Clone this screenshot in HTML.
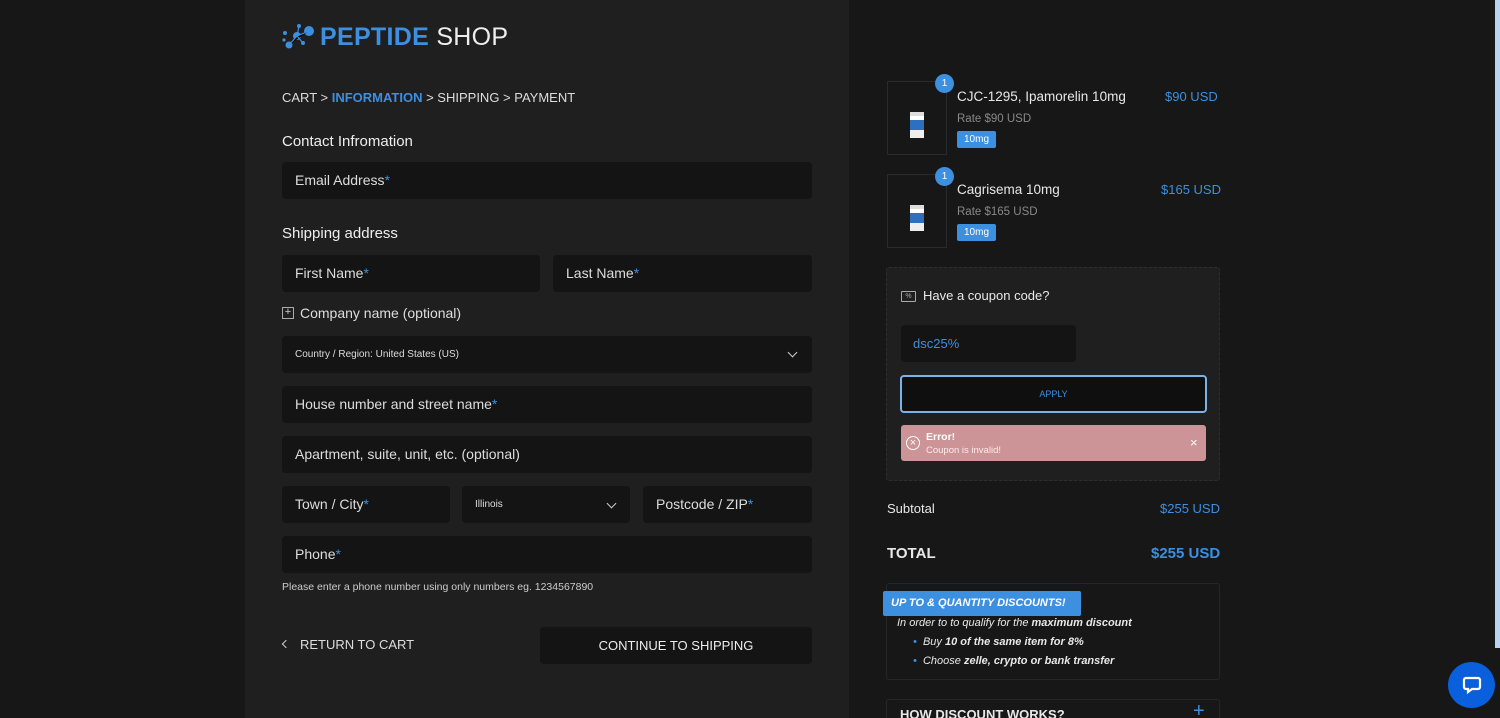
<!DOCTYPE html>
<html style="width:1500px;height:718px;overflow:hidden"><head><meta charset="utf-8"><style>
*{box-sizing:border-box;margin:0;padding:0}
body{width:1500px;height:718px;overflow:hidden;background:#171717;font-family:"Liberation Sans",sans-serif;color:#e8e8e8;position:relative}
.a{position:absolute}
.left{left:245px;top:0;width:604px;height:718px;background:#1f1f1f}
.in{position:absolute;background:#141414;border-radius:4px;height:37px;font-size:14px;color:#ddd;padding-left:13px;line-height:37px}
.in b{color:#3d8fe0;font-weight:normal}
.blue{color:#3d8fe0}
.h{font-size:15px;color:#eee}
.tag{background:#3d8fe0;color:#fff;font-size:10px;padding:0 7px;height:17px;line-height:17px;border-radius:2px}
.badge{width:19px;height:19px;border-radius:50%;background:#3d8fe0;color:#fff;font-size:10px;text-align:center;line-height:19px}
.thumb{width:60px;height:74px;border:1px solid #2a2a2a}
.vial{position:absolute;left:22px;top:30px;width:14px;height:26px;background:linear-gradient(#ddd 0 4px,#fff 4px 8px,#2d6fc0 8px 18px,#eee 18px)}
</style></head><body>
<div class="a left"></div>
<svg class="a" style="left:281px;top:22px" width="36" height="30" viewBox="0 0 36 30"><g fill="#3d8fe0"><circle cx="28" cy="9" r="5"/><circle cx="16" cy="14" r="4"/><circle cx="8" cy="23" r="3.5"/><circle cx="4" cy="11" r="2"/><circle cx="3" cy="18" r="1.6"/><circle cx="18" cy="4" r="2"/><circle cx="22" cy="21" r="2"/></g><path d="M28 9L16 14L8 23M16 14L18 4M16 14L22 21" stroke="#3d8fe0" stroke-width="1.2"/></svg>
<div class="a" style="left:320px;top:23px;font-size:25px;font-weight:bold;color:#3d8fe0;letter-spacing:0.3px">PEPTIDE <span style="color:#eee;font-weight:normal">SHOP</span></div>
<div class="a" style="left:282px;top:90px;font-size:13px;color:#ddd">CART &gt; <span class="blue" style="font-weight:bold">INFORMATION</span> &gt; SHIPPING &gt; PAYMENT</div>
<div class="a h" style="left:282px;top:133px">Contact Infromation</div>
<div class="in" style="left:282px;top:162px;width:530px">Email Address<b>*</b></div>
<div class="a h" style="left:282px;top:225px">Shipping address</div>
<div class="in" style="left:282px;top:255px;width:258px">First Name<b>*</b></div>
<div class="in" style="left:553px;top:255px;width:259px">Last Name<b>*</b></div>
<div class="a" style="left:282px;top:307px;width:12px;height:12px;border:1px solid #aaa;font-size:11px;line-height:9px;text-align:center;color:#ccc">+</div>
<div class="a" style="left:300px;top:305px;font-size:14px;color:#ddd">Company name (optional)</div>
<div class="in" style="left:282px;top:336px;width:530px;font-size:10px">Country / Region: United States (US)</div>
<div class="a" style="left:789px;top:349px;width:7px;height:7px;border-right:1.5px solid #ccc;border-bottom:1.5px solid #ccc;transform:rotate(45deg)"></div>
<div class="in" style="left:282px;top:386px;width:530px">House number and street name<b>*</b></div>
<div class="in" style="left:282px;top:436px;width:530px">Apartment, suite, unit, etc. (optional)</div>
<div class="in" style="left:282px;top:486px;width:168px">Town / City<b>*</b></div>
<div class="in" style="left:462px;top:486px;width:168px;font-size:10px">Illinois</div>
<div class="a" style="left:608px;top:500px;width:7px;height:7px;border-right:1.5px solid #ccc;border-bottom:1.5px solid #ccc;transform:rotate(45deg)"></div>
<div class="in" style="left:643px;top:486px;width:169px">Postcode / ZIP<b>*</b></div>
<div class="in" style="left:282px;top:536px;width:530px">Phone<b>*</b></div>
<div class="a" style="left:282px;top:581px;font-size:10.5px;color:#ccc">Please enter a phone number using only numbers eg. 1234567890</div>
<div class="a" style="left:283px;top:641px;width:6px;height:6px;border-left:1.5px solid #ccc;border-bottom:1.5px solid #ccc;transform:rotate(45deg)"></div>
<div class="a" style="left:300px;top:637px;font-size:13px;color:#ddd">RETURN TO CART</div>
<div class="a" style="left:540px;top:627px;width:272px;height:37px;background:#141414;border-radius:4px;text-align:center;line-height:37px;font-size:13px;color:#eee">CONTINUE TO SHIPPING</div>

<div class="a thumb" style="left:887px;top:81px"><div class="vial"></div></div>
<div class="a badge" style="left:935px;top:74px">1</div>
<div class="a" style="left:957px;top:89px;font-size:13.5px">CJC-1295, Ipamorelin 10mg</div>
<div class="a blue" style="left:1165px;top:89px;font-size:13px">$90 USD</div>
<div class="a" style="left:957px;top:113px;font-size:11.5px;color:#888">Rate $90 USD</div>
<div class="a tag" style="left:957px;top:131px">10mg</div>
<div class="a thumb" style="left:887px;top:174px"><div class="vial"></div></div>
<div class="a badge" style="left:935px;top:167px">1</div>
<div class="a" style="left:957px;top:182px;font-size:13.5px">Cagrisema 10mg</div>
<div class="a blue" style="left:1161px;top:182px;font-size:13px">$165 USD</div>
<div class="a" style="left:957px;top:206px;font-size:11.5px;color:#888">Rate $165 USD</div>
<div class="a tag" style="left:957px;top:224px">10mg</div>

<div class="a" style="left:886px;top:267px;width:334px;height:214px;background:#1f1f1f;border:1px dashed #2e2e2e;border-radius:3px"></div>
<div class="a" style="left:901px;top:291px;width:15px;height:11px;border:1px solid #aaa;border-radius:1px;font-size:7px;text-align:center;line-height:9px;color:#aaa">%</div>
<div class="a" style="left:923px;top:288px;font-size:13px">Have a coupon code?</div>
<div class="a" style="left:901px;top:325px;width:175px;height:37px;background:#141414;border-radius:4px;line-height:37px;padding-left:12px;font-size:13px;color:#3d8fe0">dsc25%</div>
<div class="a" style="left:900px;top:375px;width:307px;height:38px;background:#0f0f0f;border:2px solid #7ab3ea;border-radius:4px;text-align:center;line-height:34px;font-size:9px;color:#3d8fe0">APPLY</div>
<div class="a" style="left:901px;top:425px;width:305px;height:36px;background:#cc9496;border-radius:3px"></div>
<div class="a" style="left:906px;top:436px;width:14px;height:14px;border:1px solid #fff;border-radius:50%;color:#fff;font-size:11px;text-align:center;line-height:12px">×</div>
<div class="a" style="left:926px;top:431px;font-size:10.5px;font-weight:bold;color:#fff">Error!</div>
<div class="a" style="left:926px;top:445px;font-size:9.5px;color:#fdeaea">Coupon is invalid!</div>
<div class="a" style="left:1190px;top:435px;font-size:13px;color:#fff">×</div>

<div class="a" style="left:887px;top:501px;font-size:13px">Subtotal</div>
<div class="a blue" style="left:1160px;top:501px;font-size:13px">$255 USD</div>
<div class="a" style="left:887px;top:545px;font-size:15px;font-weight:bold">TOTAL</div>
<div class="a blue" style="left:1151px;top:545px;font-size:15px;font-weight:bold">$255 USD</div>

<div class="a" style="left:886px;top:583px;width:334px;height:97px;border:1px solid #262626;border-radius:3px"></div>
<div class="a" style="left:883px;top:591px;width:198px;height:25px;background:#3d8fe0;border-radius:2px;color:#fff;font-size:11px;font-weight:bold;font-style:italic;line-height:25px;padding-left:8px">UP TO &amp; QUANTITY DISCOUNTS!</div>
<div class="a" style="left:897px;top:617px;font-size:11px;font-style:italic">In order to to qualify for the <b>maximum discount</b></div>
<div class="a" style="left:913px;top:636px;font-size:11px;font-style:italic"><span class="blue">•</span>&nbsp; Buy <b>10 of the same item for 8%</b></div>
<div class="a" style="left:913px;top:655px;font-size:11px;font-style:italic"><span class="blue">•</span>&nbsp; Choose <b>zelle, crypto or bank transfer</b></div>
<div class="a" style="left:886px;top:699px;width:334px;height:19px;border:1px solid #262626;border-bottom:none;border-radius:3px 3px 0 0"></div>
<div class="a" style="left:900px;top:707px;font-size:13px;font-weight:bold">HOW DISCOUNT WORKS?</div>
<div class="a blue" style="left:1193px;top:700px;font-size:20px">+</div>

<div class="a" style="left:1495px;top:0;width:5px;height:648px;background:#b8d4f0"></div>
<div class="a" style="left:1448px;top:662px;width:47px;height:46px;border-radius:50%;background:#0a5fdc"></div>
<svg class="a" style="left:1462px;top:675px" width="20" height="20" viewBox="0 0 20 20"><path d="M4 3h12a2 2 0 0 1 2 2v7a2 2 0 0 1-2 2h-6l-4 3v-3H4a2 2 0 0 1-2-2V5a2 2 0 0 1 2-2z" fill="none" stroke="#fff" stroke-width="2.2"/></svg>
</body></html>
